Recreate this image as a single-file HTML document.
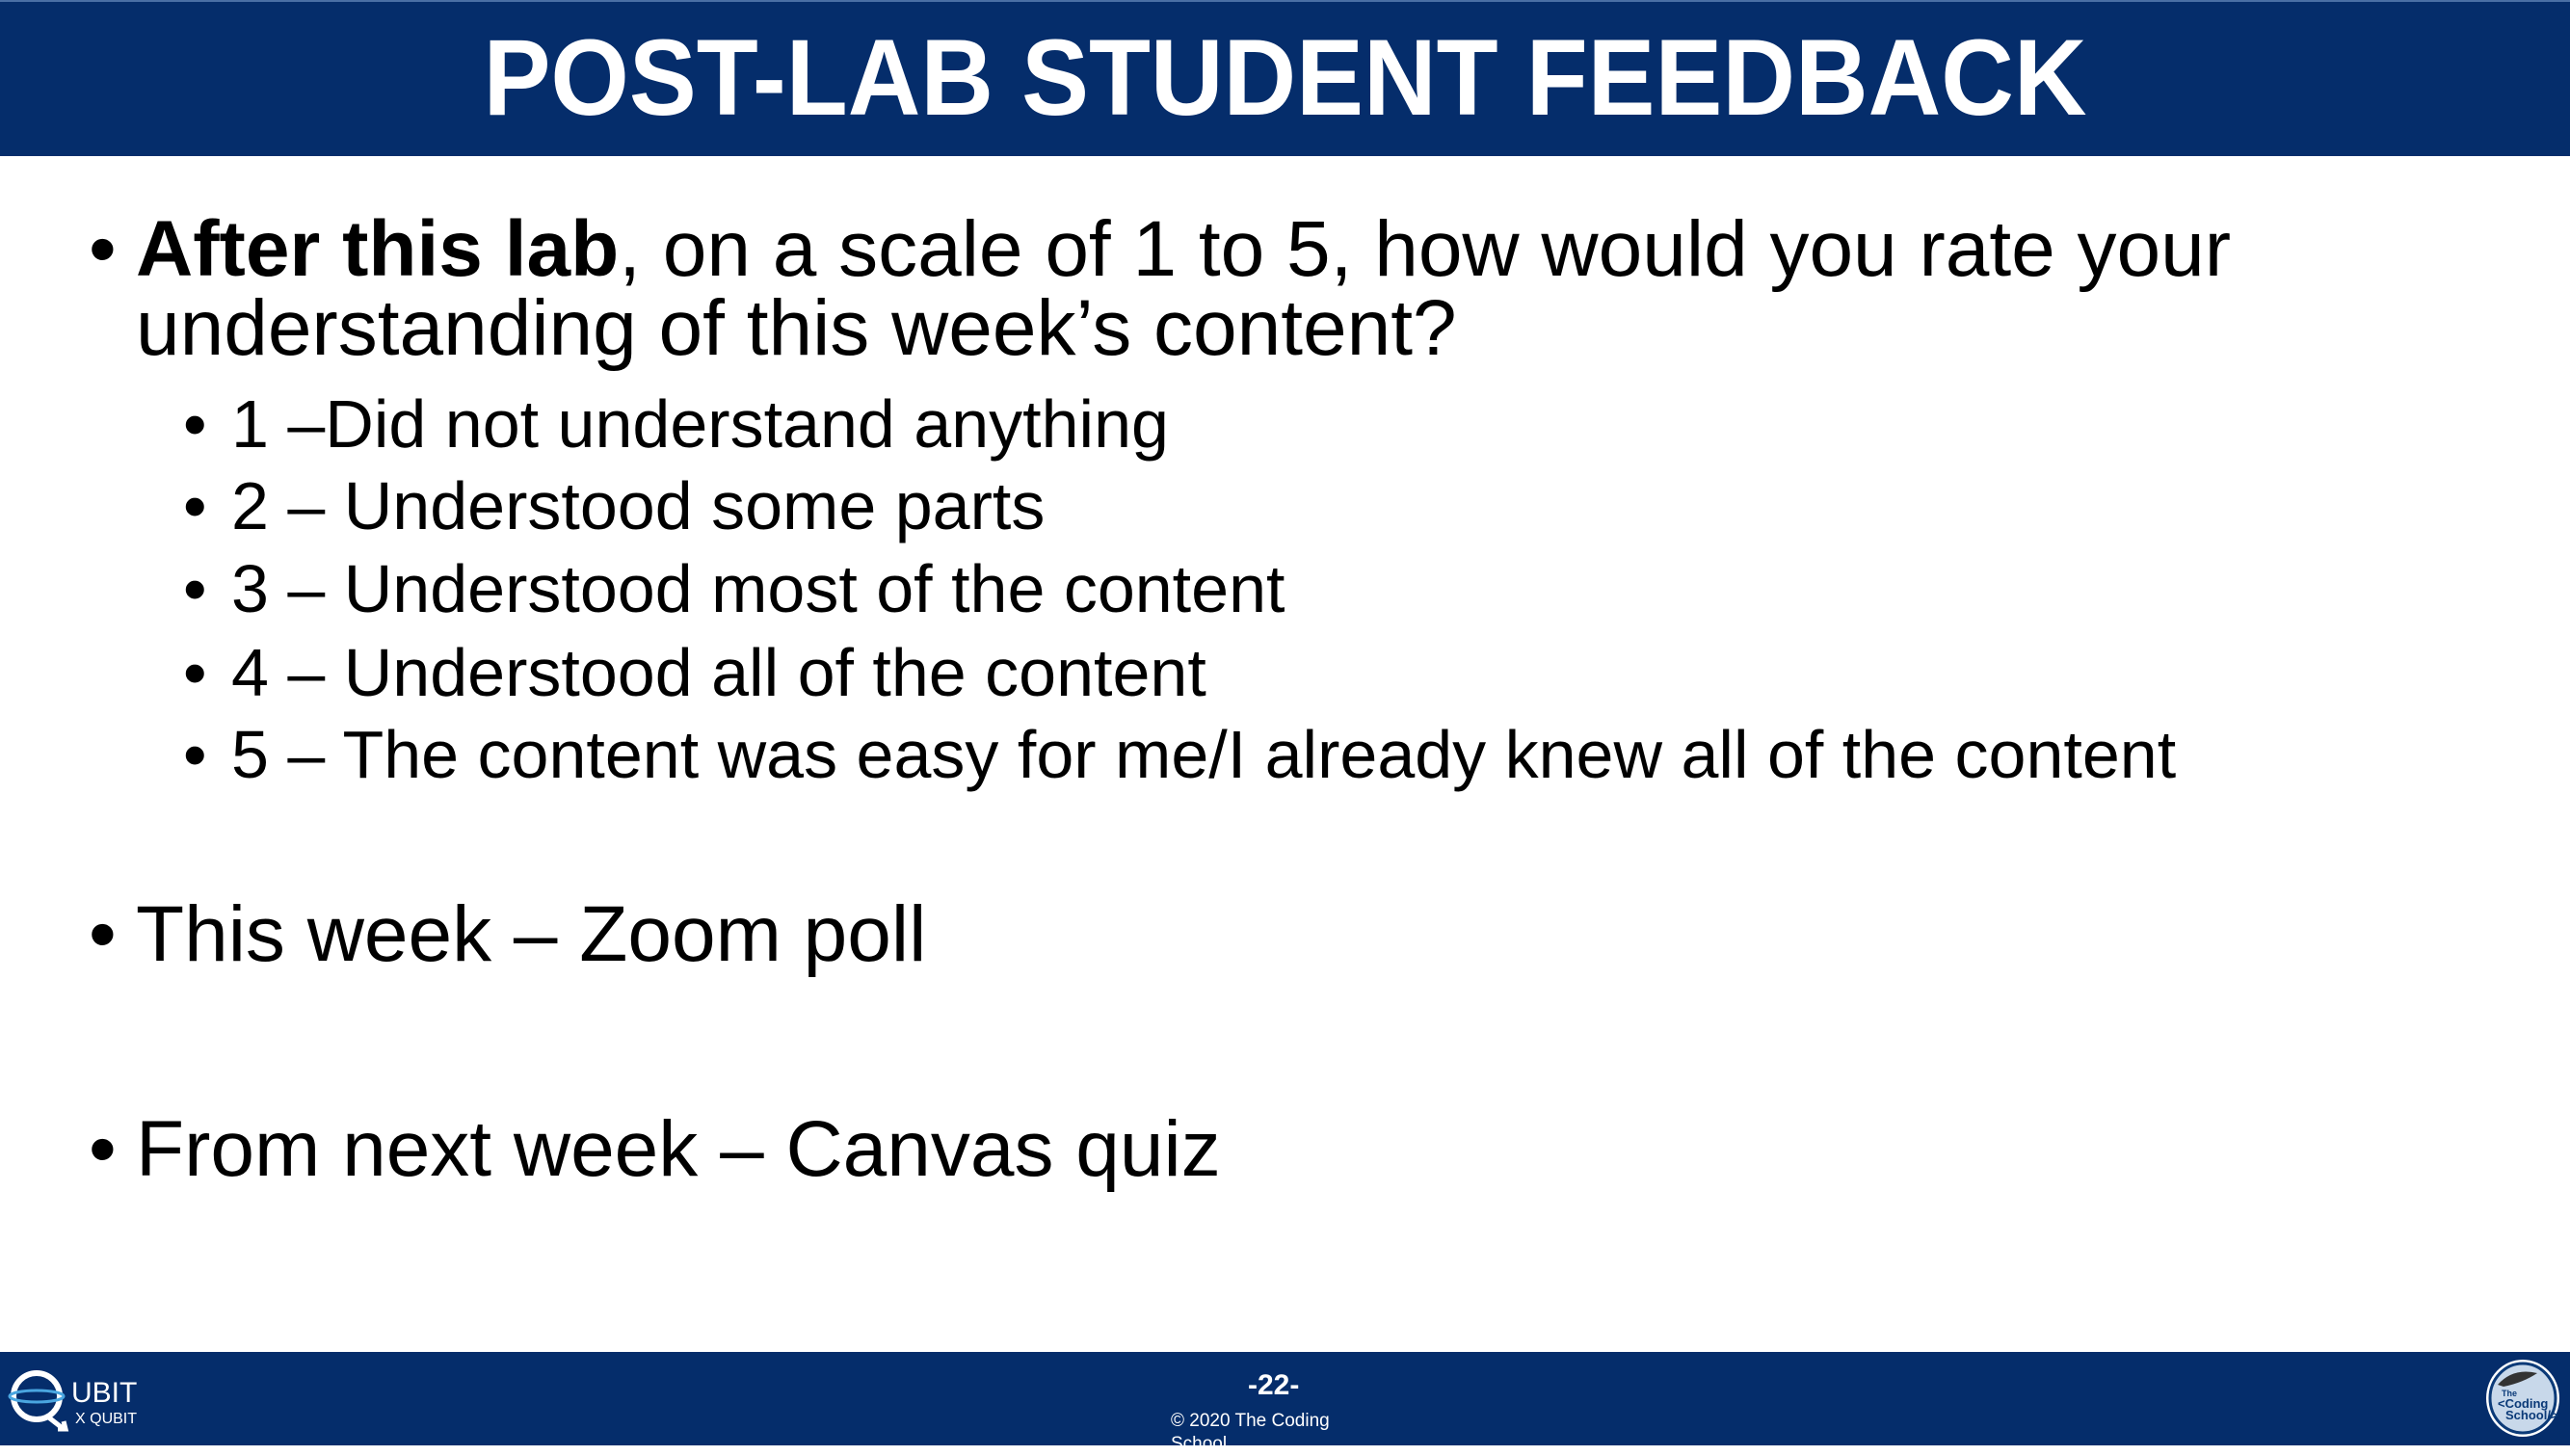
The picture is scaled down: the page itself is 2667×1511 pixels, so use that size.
<!DOCTYPE html>
<html><head><meta charset="utf-8"><style>
html,body{margin:0;padding:0}
body{width:2667px;height:1500px;position:relative;overflow:hidden;background:#fff;font-family:"Liberation Sans",sans-serif;color:#000}
.hdr{position:absolute;left:0;top:0;width:2667px;height:162px;background:#052d6b;border-top:2px solid #4a6fa5;box-sizing:border-box}
.title{position:absolute;left:0;width:2667px;top:14px;text-align:center;color:#fff;font-weight:bold;font-size:112px;line-height:130px;transform:scaleX(0.935);transform-origin:1334px 0}
.t{position:absolute;white-space:nowrap}
.l1{font-size:82px}
.l2{font-size:70px}
.ft{position:absolute;left:0;top:1403px;width:2667px;height:97px;background:#052d6b}
</style></head><body>
<div class="hdr"><div class="title">POST-LAB STUDENT FEEDBACK</div></div>

<div class="t l1" style="left:92px;top:212px">•</div>
<div class="t l1" style="left:141px;top:212px"><b>After this lab</b>, on a scale of 1 to 5, how would you rate your</div>
<div class="t l1" style="left:141px;top:294px">understanding of this week’s content?</div>

<div class="t l2" style="left:190px;top:400px">•</div><div class="t l2" style="left:240px;top:400px">1 –Did not understand anything</div>
<div class="t l2" style="left:190px;top:485px">•</div><div class="t l2" style="left:240px;top:485px">2 – Understood some parts</div>
<div class="t l2" style="left:190px;top:571px">•</div><div class="t l2" style="left:240px;top:571px">3 – Understood most of the content</div>
<div class="t l2" style="left:190px;top:658px">•</div><div class="t l2" style="left:240px;top:658px">4 – Understood all of the content</div>
<div class="t l2" style="left:190px;top:743px">•</div><div class="t l2" style="left:240px;top:743px">5 – The content was easy for me/I already knew all of the content</div>

<div class="t l1" style="left:92px;top:923px">•</div><div class="t l1" style="left:141px;top:923px">This week – Zoom poll</div>
<div class="t l1" style="left:92px;top:1146px">•</div><div class="t l1" style="left:141px;top:1146px">From next week – Canvas quiz</div>

<div class="ft">
<svg style="position:absolute;left:8px;top:14px" width="160" height="72" viewBox="0 0 160 72">
<circle cx="30" cy="32" r="24" fill="none" stroke="#fff" stroke-width="6"/>
<path d="M40 52 L58 66 M52 66 L60 66 L58 58" stroke="#fff" stroke-width="5" fill="none"/>
<ellipse cx="30" cy="32" rx="28" ry="6" fill="none" stroke="#4aa6e0" stroke-width="3"/>
<text x="66" y="38" fill="#fff" font-family="Liberation Sans" font-size="30">UBIT</text>
<text x="70" y="60" fill="#fff" font-family="Liberation Sans" font-size="16">X QUBIT</text>
</svg>
<div class="t" style="left:1295px;top:18px;color:#fff;font-weight:bold;font-size:30px">-22-</div>
<div class="t" style="left:1215px;top:60px;color:#fff;font-size:19px;line-height:24px">© 2020 The Coding<br>School</div>
<svg style="position:absolute;left:2578px;top:6px" width="80" height="84" viewBox="0 0 80 84">
<ellipse cx="40" cy="42" rx="38" ry="40" fill="#fff"/>
<ellipse cx="40" cy="42" rx="34" ry="36" fill="#c8d8ea" stroke="#0b3a78" stroke-width="3"/>
<path d="M14 28 Q30 10 55 16 Q40 26 20 30Z" fill="#333"/>
<text x="18" y="40" font-family="Liberation Sans" font-weight="bold" font-size="9" fill="#0b3a78">The</text>
<text x="14" y="52" font-family="Liberation Sans" font-weight="bold" font-size="13" fill="#0b3a78">&lt;Coding</text>
<text x="22" y="64" font-family="Liberation Sans" font-weight="bold" font-size="13" fill="#0b3a78">School/&gt;</text>
</svg>
</div>
</body></html>
